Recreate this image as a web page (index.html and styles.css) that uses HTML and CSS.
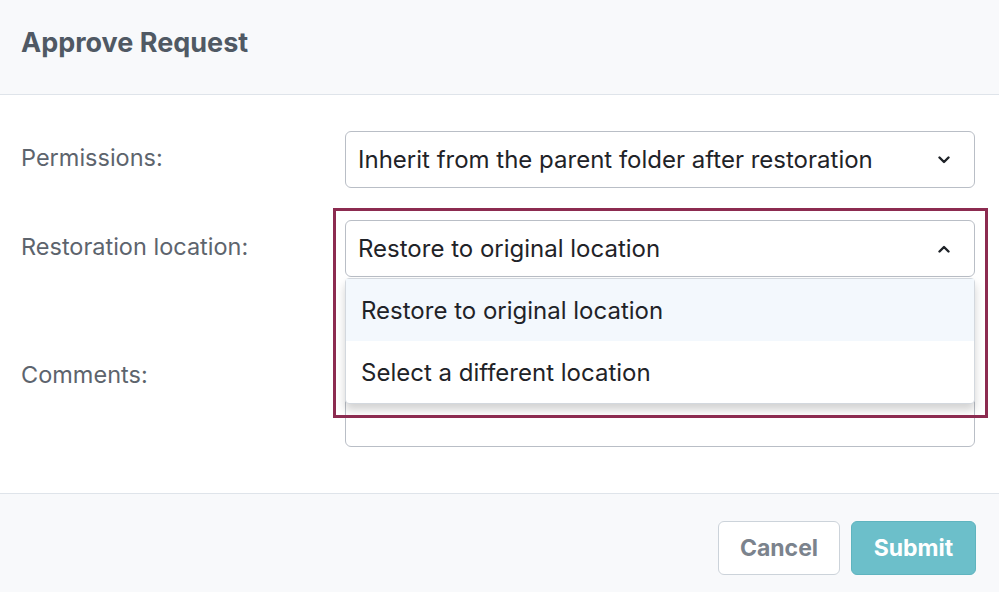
FILE: index.html
```html
<!DOCTYPE html>
<html lang="en">
<head>
  <meta charset="UTF-8">
  <meta name="viewport" content="width=device-width, initial-scale=1.0">
  <title>Approve Request</title>
  <link rel="stylesheet" href="styles.css">
</head>
<body>
  <div class="modal">
    <div class="modal-header">
      <h2>Approve Request</h2>
    </div>

    <div class="modal-body">
      <div class="row">
        <label class="label">Permissions:</label>
        <div class="select">
          <span>Inherit from the parent folder after restoration</span>
          <svg class="chevron" width="12" height="8" viewBox="0 0 12 8"><path d="M1.5 1.5 6 6l4.5-4.5" fill="none" stroke="#1f2328" stroke-width="2.4" stroke-linecap="round" stroke-linejoin="round"/></svg>
        </div>
      </div>

      <div class="row">
        <label class="label">Restoration location:</label>
        <div class="field-wrap">
          <div class="select open">
            <span>Restore to original location</span>
            <svg class="chevron" width="12" height="8" viewBox="0 0 12 8"><path d="M1.5 6.5 6 2l4.5 4.5" fill="none" stroke="#1f2328" stroke-width="2.4" stroke-linecap="round" stroke-linejoin="round"/></svg>
          </div>
          <div class="menu">
            <div class="option active">Restore to original location</div>
            <div class="option">Select a different location</div>
          </div>
          <div class="highlight"></div>
        </div>
      </div>

      <div class="row comments">
        <label class="label">Comments:</label>
        <textarea class="textarea"></textarea>
      </div>
    </div>

    <div class="modal-footer">
      <button type="button" class="btn btn-cancel">Cancel</button>
      <button type="button" class="btn btn-submit">Submit</button>
    </div>
  </div>
</body>
</html>
```

FILE: styles.css
```css
body{
  margin: 0;
  background-color: white;
  font-family: Inter, "Liberation Sans", sans-serif;
  color: #1f2328;
}
.modal{
  width: 999px;
  height: 592px;
  display: flex;
  flex-direction: column;
}
.modal-header{
  height: 94px;
  background-color: #f8f9fb;
  border-bottom: 1px solid #dfe4ea;
  display: flex;
  align-items: center;
  padding: 0 21px;
}
.modal-header h2{
  margin: 0;
  font-size: 27px;
  font-weight: 700;
  color: #505964;
  padding-bottom: 10px;
}
.modal-body{
  flex: 1;
  padding: 36px 24px 0 21px;
}
.row{
  display: grid;
  grid-template-columns: 324px 1fr;
  align-items: center;
  margin-bottom: 32px;
}
.label{
  font-size: 23.5px;
  color: #5d646d;
  padding-bottom: 4px;
}
.field-wrap{
  position: relative;
}
.select{
  height: 55px;
  border: 1px solid #b9bec6;
  border-radius: 6px;
  display: flex;
  align-items: center;
  justify-content: space-between;
  padding: 0 24px 0 12px;
  font-size: 24px;
  background: white;
}
.chevron{
  flex: none;
}
.menu{
  position: absolute;
  top: 58px;
  left: 0;
  right: 0;
  background: white;
  border: 1px solid #d3d8de;
  border-radius: 4px;
  box-shadow: 0 6px 10px rgba(0, 0, 0, 0.18);
  z-index: 2;
}
.option{
  height: 62px;
  display: flex;
  align-items: center;
  padding: 0 15px;
  font-size: 24px;
}
.option.active{
  background-color: #f3f8fd;
}
.highlight{
  position: absolute;
  top: -12px;
  left: -12px;
  right: -13px;
  height: 204px;
  border: 3px solid #8c2b50;
  z-index: 3;
  pointer-events: none;
}
.row.comments{
  align-items: start;
  margin-top: 82px;
}
.comments .label{
  padding-top: 1px;
}
.textarea{
  box-sizing: border-box;
  height: 88px;
  border: 1px solid #b9bec6;
  border-radius: 6px;
  resize: none;
  margin: 0;
}
.modal-footer{
  height: 99px;
  background-color: #f8f9fb;
  border-top: 1px solid #dfe4ea;
  display: flex;
  justify-content: flex-end;
  align-items: flex-start;
  gap: 11px;
  padding: 27px 23px 0 0;
  box-sizing: border-box;
}
.btn{
  height: 54px;
  border-radius: 6px;
  font-family: Inter, "Liberation Sans", sans-serif;
  font-size: 23px;
  font-weight: 700;
  cursor: pointer;
}
.btn-cancel{
  width: 122px;
  background: white;
  border: 1px solid #ccd3da;
  color: #7b838d;
}
.btn-submit{
  width: 125px;
  background: #6cbfca;
  border: 1px solid #5fb4bf;
  color: white;
}
```
